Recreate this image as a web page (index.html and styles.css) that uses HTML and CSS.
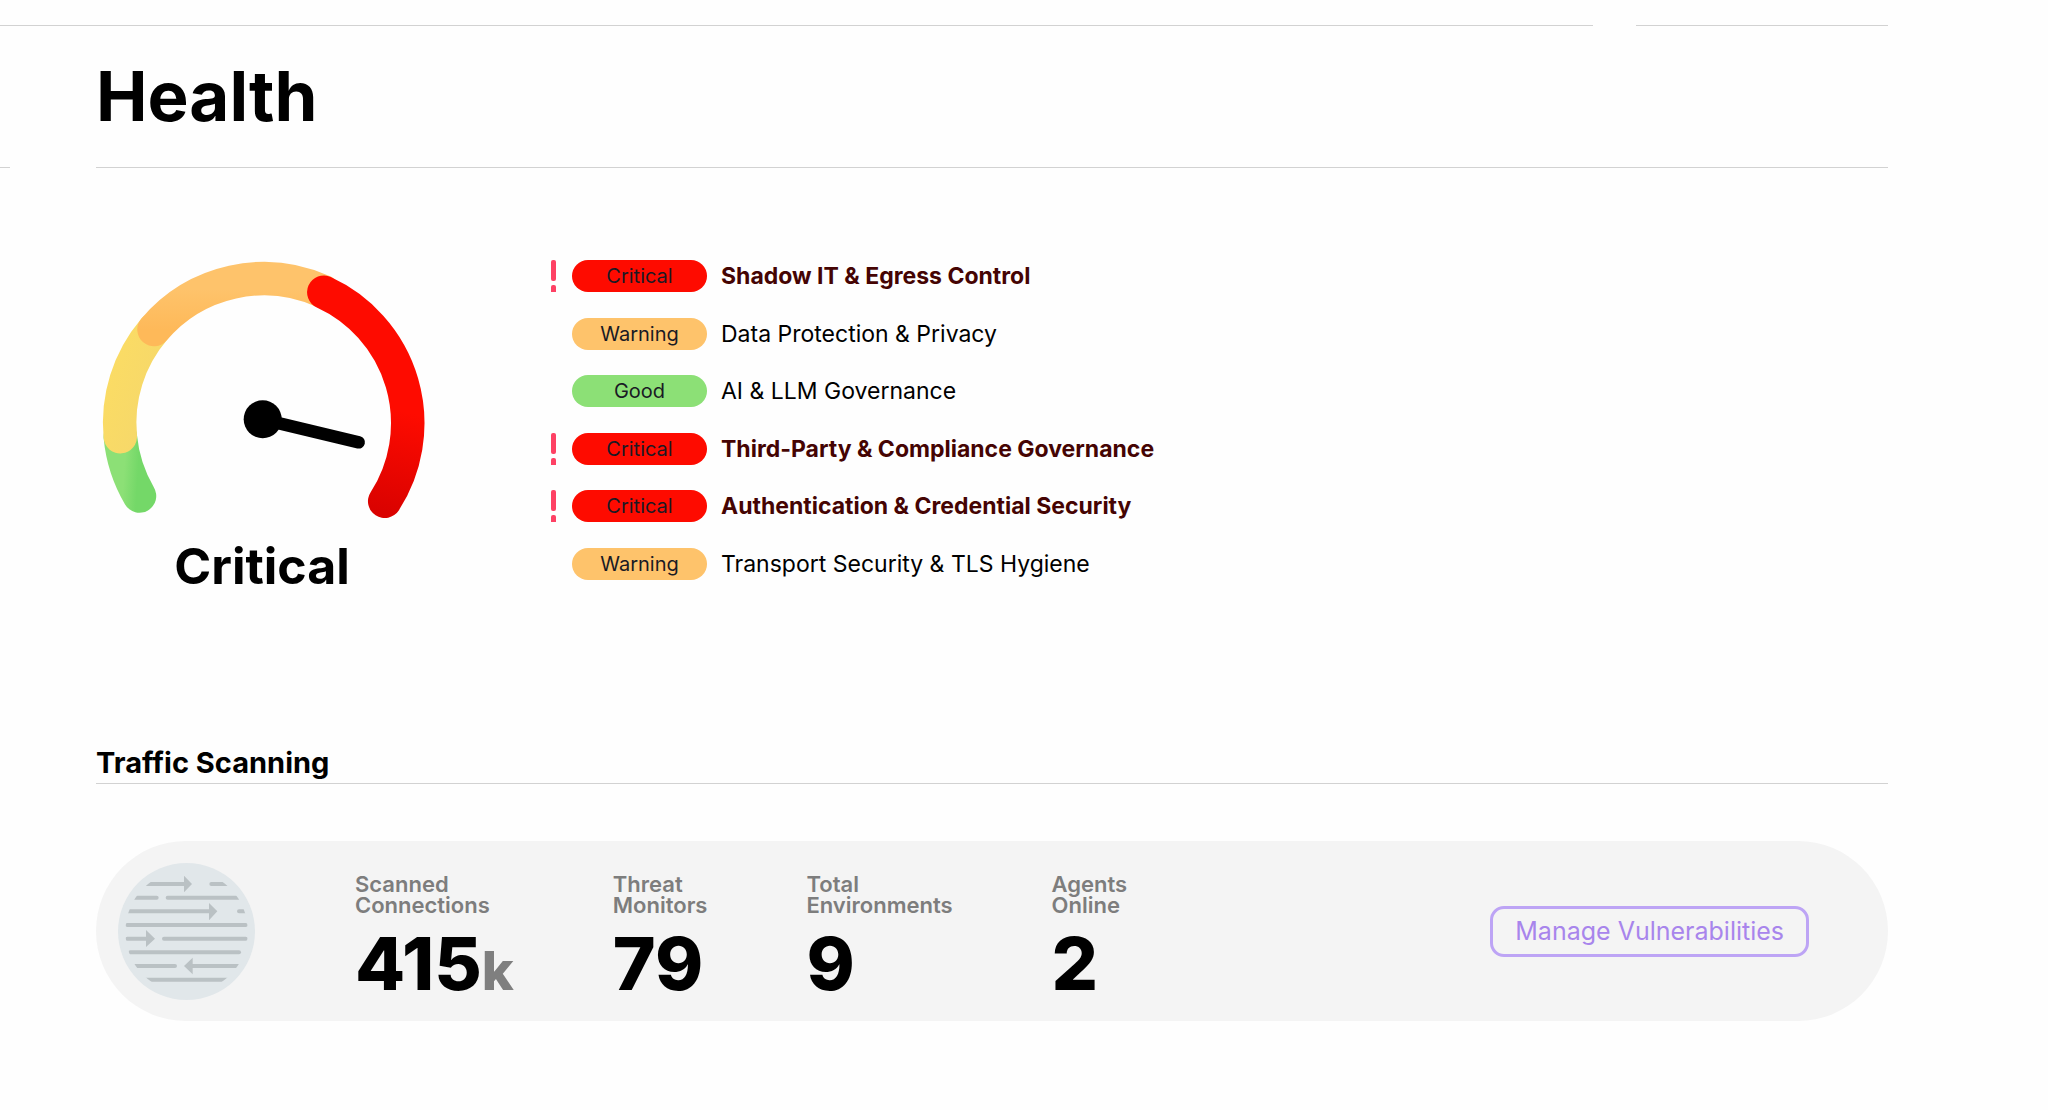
FILE: index.html
```html
<!DOCTYPE html>
<html lang="en">
<head>
  <meta charset="UTF-8" />
  <title>Health</title>
  <link rel="stylesheet" href="styles.css">
</head>
<body>
  <div class="top-rules">
    <div class="rule rule-main"></div>
    <div class="rule rule-side"></div>
  </div>

  <header class="page-header">
    <div class="header-stub"></div>
    <h1>Health</h1>
  </header>

  <main>
    <section class="health">
      <div class="gauge">
        <svg viewBox="0 0 332 268" width="332" height="268" aria-hidden="true">
          <defs>
            <linearGradient id="green" x1="0" y1="0" x2="1" y2="0.2">
              <stop offset="0.3" stop-color="#8ce076" />
              <stop offset="1" stop-color="#74d868" />
            </linearGradient>
            <linearGradient id="yellow" x1="0" y1="0" x2="1" y2="1">
              <stop offset="0" stop-color="#fbdc64" />
              <stop offset="1" stop-color="#f5d76b" />
            </linearGradient>
            <linearGradient id="orange" x1="0" y1="0" x2="0" y2="1">
              <stop offset="0.2" stop-color="#fec36b" />
              <stop offset="1" stop-color="#feb959" />
            </linearGradient>
            <linearGradient id="red" x1="0.3" y1="0" x2="0.2" y2="1">
              <stop offset="0.5" stop-color="#fe0b00" />
              <stop offset="1" stop-color="#da0200" />
            </linearGradient>
          </defs>
          <g fill="none" stroke-width="33.5" stroke-linecap="round">
            <path stroke="url(#green)" d="M43.5 240 A144 144 0 0 1 24.3 180.7" />
            <path stroke="url(#yellow)" d="M24.3 180.7 A144 144 0 0 1 58 73.5" />
            <path stroke="url(#orange)" d="M58 73.5 A144 144 0 0 1 227.8 35.8" />
            <path stroke="url(#red)" d="M227.8 36.3 A144 144 0 0 1 288.7 245.3" />
          </g>
          <path d="M166.7 163.3 L262.7 186.3" stroke="#000" stroke-width="12.5" stroke-linecap="round" />
          <circle cx="166.7" cy="163.3" r="19" />
        </svg>
        <div class="gauge-label">Critical</div>
      </div>

      <ul class="checks">
        <li class="check is-critical"><span class="mark"></span><span class="badge critical">Critical</span><span class="name">Shadow IT &amp; Egress Control</span></li>
        <li class="check"><span class="badge warning">Warning</span><span class="name">Data Protection &amp; Privacy</span></li>
        <li class="check"><span class="badge good">Good</span><span class="name">AI &amp; LLM Governance</span></li>
        <li class="check is-critical"><span class="mark"></span><span class="badge critical">Critical</span><span class="name">Third-Party &amp; Compliance Governance</span></li>
        <li class="check is-critical"><span class="mark"></span><span class="badge critical">Critical</span><span class="name">Authentication &amp; Credential Security</span></li>
        <li class="check"><span class="badge warning">Warning</span><span class="name">Transport Security &amp; TLS Hygiene</span></li>
      </ul>
    </section>

    <section class="traffic">
      <h2>Traffic Scanning</h2>
      <div class="panel">
        <svg class="traffic-icon" viewBox="0 0 411 411" aria-hidden="true">
          <defs>
            <clipPath id="globe"><circle cx="206" cy="206" r="184" /></clipPath>
          </defs>
          <circle cx="205.5" cy="205.5" r="205.5" fill="#e1e7ea" />
          <g clip-path="url(#globe)" stroke="#bac1c4" stroke-width="12" stroke-linecap="round">
            <path d="M70 63H200M280 63H340" />
            <path d="M40 104H116M149 104H370" />
            <path d="M20 145H275M363 145H390" />
            <path d="M28 186H383" />
            <path d="M28 227H88M138 227H383" />
            <path d="M37 268H363" />
            <path d="M40 309H171M220 309H370" />
            <path d="M70 350H340" />
          </g>
          <path fill="#bac1c4" d="M198 38L222 63L198 88ZM273 120L298 145L273 172ZM84 201L111 227L84 252ZM224 284L198 309L224 334Z" />
        </svg>
        <dl class="stats">
          <div class="stat"><dt>Scanned<br>Connections</dt><dd>415<span class="unit">k</span></dd></div>
          <div class="stat"><dt>Threat<br>Monitors</dt><dd>79</dd></div>
          <div class="stat"><dt>Total<br>Environments</dt><dd>9</dd></div>
          <div class="stat"><dt>Agents<br>Online</dt><dd>2</dd></div>
        </dl>
        <button type="button" class="manage">Manage Vulnerabilities</button>
      </div>
    </section>
  </main>
</body>
</html>
```
FILE: styles.css
```css
* {
  box-sizing: border-box;
}

body {
  margin: 0;
  padding-top: 25px;
  background: #fefefe;
  color: #000;
  font-family: Inter, "Liberation Sans", sans-serif;
}

/* header */
.top-rules {
  display: flex;
  gap: 43px;
  margin-right: 160px;
}

.rule {
  height: 1px;
  background: #d2d2d2;
}

.rule-main {
  flex: 1;
}

.rule-side {
  width: 252px;
}

.page-header {
  display: flex;
  gap: 86px;
  margin-right: 160px;
}

.header-stub {
  width: 10px;
  border-bottom: 1px solid #d2d2d2;
}

h1 {
  flex: 1;
  margin: 0;
  padding: 28px 0;
  border-bottom: 1px solid #d2d2d2;
  font-size: 69px;
  font-weight: 700;
  line-height: 85px;
}

main {
  padding: 0 160px 0 96px;
}

/* gauge and checks */
.health {
  display: flex;
  align-items: flex-start;
  gap: 123px;
  padding-top: 88px;
}

.gauge {
  width: 332px;
}

.gauge svg {
  display: block;
}

.gauge-label {
  font-size: 50px;
  font-weight: 700;
  line-height: 84px;
  text-align: center;
}

.checks {
  display: flex;
  flex-direction: column;
  justify-content: space-between;
  min-height: 320px;
  margin: 4px 0 0;
  padding: 0;
  list-style: none;
}

.check {
  display: grid;
  grid-template-columns: 7px 135px auto;
  column-gap: 14px;
  align-items: center;
}

.mark {
  height: 32px;
  display: grid;
  grid-template-rows: 21px 7px;
  row-gap: 4px;
}

.mark::before,
.mark::after {
  content: "";
  width: 5px;
  border-radius: 2px;
  background: #fe4164;
}

.mark::after {
  border-radius: 2px 2px 0 0;
}

.badge {
  grid-column: 2;
  border-radius: 16px;
  color: #1a1a24;
  font-size: 20px;
  line-height: 32px;
  text-align: center;
}

.badge.critical {
  background: #fe0b00;
}

.badge.warning {
  background: #fec36b;
}

.badge.good {
  background: #8ce076;
}

.name {
  font-size: 23px;
  line-height: 32px;
}

.is-critical .name {
  color: #450403;
  font-weight: 700;
}

/* traffic scanning */
.traffic {
  padding-top: 134px;
}

h2 {
  margin: 0 0 57px;
  border-bottom: 1px solid #d2d2d2;
  font-size: 29px;
  font-weight: 700;
  line-height: 41px;
}

.panel {
  display: flex;
  align-items: center;
  gap: 100px;
  min-height: 180px;
  padding: 0 79px 0 22px;
  border-radius: 90px;
  background: #f4f4f4;
}

.traffic-icon {
  width: 137px;
  height: 137px;
}

.stats {
  display: flex;
  gap: 99px;
  margin: 0;
  padding-top: 21px;
}

dt {
  color: #7d7d7d;
  font-size: 22px;
  font-weight: 600;
  line-height: 21px;
}

dd {
  margin: 9px 0 0;
  font-size: 73px;
  font-weight: 800;
  line-height: 78px;
}

.unit {
  color: #7f7f7f;
  font-size: 54px;
}

.manage {
  margin-left: auto;
  padding: 0 22px;
  border: 3px solid #bda4f5;
  border-radius: 14px;
  background: none;
  color: #a885ec;
  font-family: inherit;
  font-size: 25px;
  line-height: 45px;
}
```
